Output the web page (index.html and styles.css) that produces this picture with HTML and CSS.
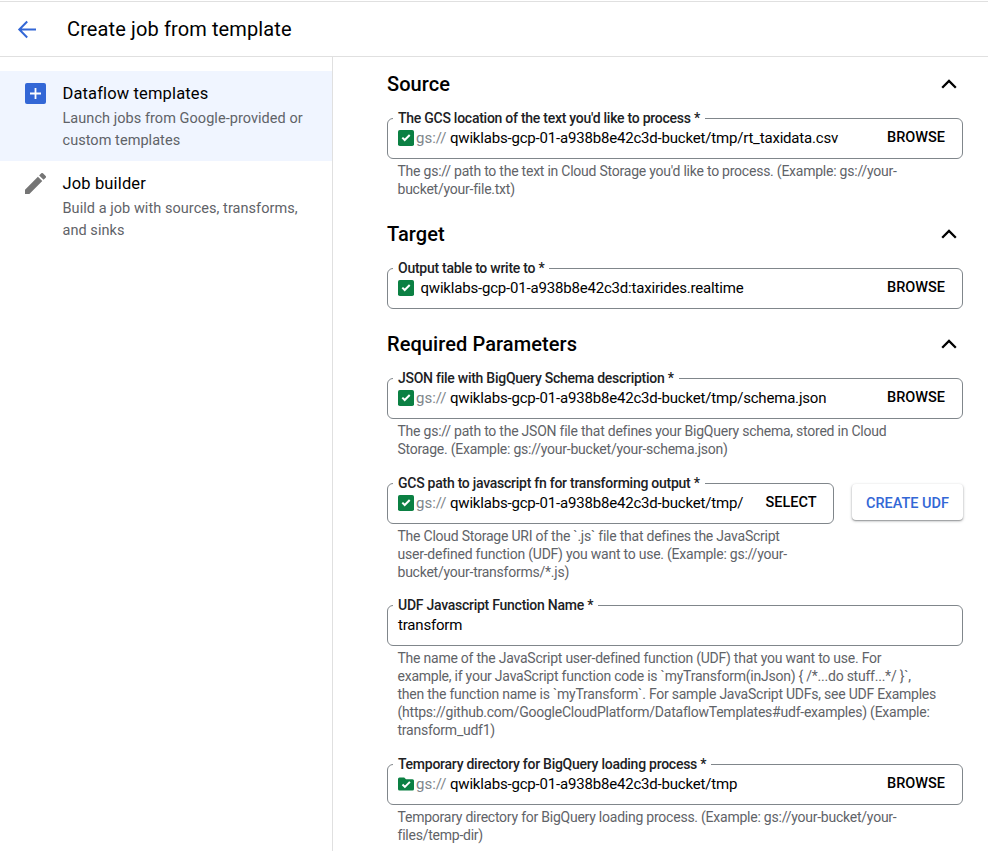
FILE: index.html
```html
<!DOCTYPE html>
<html lang="en">
<head>
<meta charset="utf-8">
<title>Create job from template</title>
<link rel="stylesheet" href="styles.css">
</head>
<body>
<svg class="defs" width="0" height="0" aria-hidden="true">
  <symbol id="chevron" viewBox="0 0 16 10"><path d="M1.2 8.7 8 1.9l6.8 6.8" fill="none" stroke="currentColor" stroke-width="2.3"/></symbol>
  <symbol id="check-box" viewBox="0 0 16 16"><rect width="16" height="16" rx="1.8" fill="#0b8043"/><path d="m4.3 7.600 2.400 2.400 5-5" fill="none" stroke="#fff" stroke-width="2"/></symbol>
  <symbol id="check-folder" viewBox="0 0 16 16"><path d="M1.5 1.5h4.7L8 3.2h6.5A1.5 1.5 0 0 1 16 4.700v8.300a1.500 1.500 0 0 1-1.500 1.500h-13A1.500 1.500 0 0 1 0 13V3a1.500 1.500 0 0 1 1.500-1.500z" fill="#0b8043"/><path d="m4.500 8.500 2.400 2.400 5-5" fill="none" stroke="#fff" stroke-width="2"/></symbol>
</svg>
<header class="topbar">
  <svg class="back" viewBox="0 0 18 18"><path d="M18 9.500H1.500M9.200 1.500 1.300 9.500l7.900 8" fill="none" stroke="currentColor" stroke-width="2"/></svg>
  <h1>Create job from template</h1>
</header>
<div class="layout">
  <nav class="sidebar">
    <a class="nav-item active">
      <svg class="nav-icon blue" viewBox="0 0 21 21"><rect width="21" height="21" rx="2" fill="currentColor"/><path d="M10.500 5v11M5 10.500h11" stroke="#fff" stroke-width="1.800"/></svg>
      <div><div class="nav-title">Dataflow templates</div><div class="nav-desc">Launch jobs from Google-provided or<br>custom templates</div></div>
    </a>
    <a class="nav-item">
      <svg class="nav-icon gray" viewBox="3 3 18 18"><path fill="currentColor" d="M3 17.250V21h3.750L17.810 9.940l-3.750-3.750L3 17.250zM20.710 7.040a1 1 0 0 0 0-1.410l-2.340-2.340a1 1 0 0 0-1.410 0l-1.830 1.830 3.750 3.750 1.830-1.830z"/></svg>
      <div><div class="nav-title">Job builder</div><div class="nav-desc">Build a job with sources, transforms,<br>and sinks</div></div>
    </a>
  </nav>
  <main class="form">
    <section class="group">
      <div class="group-head"><h2>Source</h2><svg class="chevron"><use href="#chevron"/></svg></div>
      <div class="field"><label>The GCS location of the text you'd like to process *</label><svg class="check"><use href="#check-box"/></svg><span class="prefix">gs://</span><span class="value">qwiklabs-gcp-01-a938b8e42c3d-bucket/tmp/rt_taxidata.csv</span><button class="pick">BROWSE</button></div>
      <p class="hint">The gs:// path to the text in Cloud Storage you'd like to process. (Example: gs://your-<br>bucket/your-file.txt)</p>
    </section>
    <section class="group compact">
      <div class="group-head"><h2>Target</h2><svg class="chevron"><use href="#chevron"/></svg></div>
      <div class="field"><label>Output table to write to *</label><svg class="check"><use href="#check-box"/></svg><span class="value table">qwiklabs-gcp-01-a938b8e42c3d:taxirides.realtime</span><button class="pick">BROWSE</button></div>
    </section>
    <section class="group">
      <div class="group-head"><h2>Required Parameters</h2><svg class="chevron"><use href="#chevron"/></svg></div>
      <div class="field"><label>JSON file with BigQuery Schema description *</label><svg class="check"><use href="#check-box"/></svg><span class="prefix">gs://</span><span class="value">qwiklabs-gcp-01-a938b8e42c3d-bucket/tmp/schema.json</span><button class="pick">BROWSE</button></div>
      <p class="hint">The gs:// path to the JSON file that defines your BigQuery schema, stored in Cloud<br>Storage. (Example: gs://your-bucket/your-schema.json)</p>
      <div class="field-row">
        <div class="field"><label>GCS path to javascript fn for transforming output *</label><svg class="check"><use href="#check-box"/></svg><span class="prefix">gs://</span><span class="value">qwiklabs-gcp-01-a938b8e42c3d-bucket/tmp/</span><button class="pick">SELECT</button></div>
        <button class="create">CREATE UDF</button>
      </div>
      <p class="hint tight">The Cloud Storage URI of the `.js` file that defines the JavaScript<br>user-defined function (UDF) you want to use. (Example: gs://your-<br>bucket/your-transforms/*.js)</p>
      <div class="field"><label>UDF Javascript Function Name *</label><span class="value">transform</span></div>
      <p class="hint">The name of the JavaScript user-defined function (UDF) that you want to use. For<br>example, if your JavaScript function code is `myTransform(inJson) { /*...do stuff...*/ }`,<br>then the function name is `myTransform`. For sample JavaScript UDFs, see UDF Examples<br>(https://github.com/GoogleCloudPlatform/DataflowTemplates#udf-examples) (Example:<br>transform_udf1)</p>
      <div class="field"><label>Temporary directory for BigQuery loading process *</label><svg class="check"><use href="#check-folder"/></svg><span class="prefix">gs://</span><span class="value">qwiklabs-gcp-01-a938b8e42c3d-bucket/tmp</span><button class="pick">BROWSE</button></div>
      <p class="hint">Temporary directory for BigQuery loading process. (Example: gs://your-bucket/your-<br>files/temp-dir)</p>
    </section>
  </main>
</div>
</body>
</html>
```
FILE: styles.css
```css
* { box-sizing: border-box; }
body { margin: 0; height: 851px; overflow: hidden; background: #fff; color: #000; font-family: Roboto, "Liberation Sans", sans-serif; }
h1, h2, p { margin: 0; }
button { font-family: inherit; border: 0; background: none; padding: 0; }
.defs { position: absolute; }
.topbar { display: flex; align-items: center; height: 56px; margin-top: 1px; padding-left: 17.5px; border-top: 1px solid #e0e0e0; border-bottom: 1px solid #e0e0e0; }
.back { width: 18px; height: 18px; color: #3367d6; overflow: visible; }
h1 { margin-left: 31.5px; font-size: 20px; line-height: 28px; font-weight: 400; letter-spacing: 0.12px; }
.layout { display: flex; height: 794px; }
.sidebar { flex: none; width: 333px; padding-top: 14px; border-right: 1px solid #e0e0e0; }
.nav-item { display: flex; height: 90px; padding: 12px 0 0 25px; }
.active { background: #f0f5ff; }
.nav-icon { flex: none; width: 21px; height: 21px; margin-right: 16.5px; }
.blue { color: #3367d6; }
.gray { color: #757575; }
.nav-title { padding-top: 1px; font-size: 16.5px; line-height: 20px; letter-spacing: 0.14px; }
.nav-desc { margin-top: 4px; font-size: 14.5px; line-height: 22px; letter-spacing: 0.05px; color: #5f6368; white-space: nowrap; }
.form { width: 630px; padding: 11px 0 0 54px; }
.group { margin-bottom: 20px; }
.compact { margin-bottom: 19px; }
.group-head { display: flex; align-items: center; justify-content: space-between; height: 32px; padding-right: 6px; margin-bottom: 18px; }
h2 { font-size: 20px; line-height: 32px; font-weight: 500; letter-spacing: 0.08px; }
.chevron { width: 16px; height: 10px; }
.field { position: relative; display: flex; align-items: center; height: 41px; padding: 0 17px 2px 10px; border: 1px solid #80868b; border-radius: 6px; }
.field label { position: absolute; left: 5px; top: -9px; padding: 0 5px; background: #fff; font-size: 14px; line-height: 16px; font-weight: 500; letter-spacing: -0.26px; color: #202124; white-space: nowrap; }
.check { flex: none; width: 16px; height: 16px; }
.prefix { width: 34px; margin-left: 2px; font-size: 15px; line-height: 20px; color: #80868b; }
.value { flex: 1; font-size: 15px; line-height: 20px; letter-spacing: -0.19px; white-space: nowrap; }
.table { margin-left: 6.5px; }
.pick { font-size: 14.5px; line-height: 20px; font-weight: 500; margin-top: 1px; }
.hint { margin: 3px 0 25px 10.5px; font-size: 14px; line-height: 18px; letter-spacing: -0.235px; color: #5f6368; white-space: nowrap; }
.tight { margin-bottom: 24px; }
.group > .hint:last-child { margin-bottom: 0; }
.field-row { display: flex; gap: 18px; }
.field-row .field { width: 447px; padding-right: 16.5px; }
.create { width: 111px; height: 36px; margin-top: 1px; padding-top: 2px; border-radius: 4px; background: #fff; box-shadow: 0 1px 3px rgba(60,64,67,.4), 0 1px 1px rgba(60,64,67,.3); color: #3367d6; font-size: 14.5px; font-weight: 500; }
```
